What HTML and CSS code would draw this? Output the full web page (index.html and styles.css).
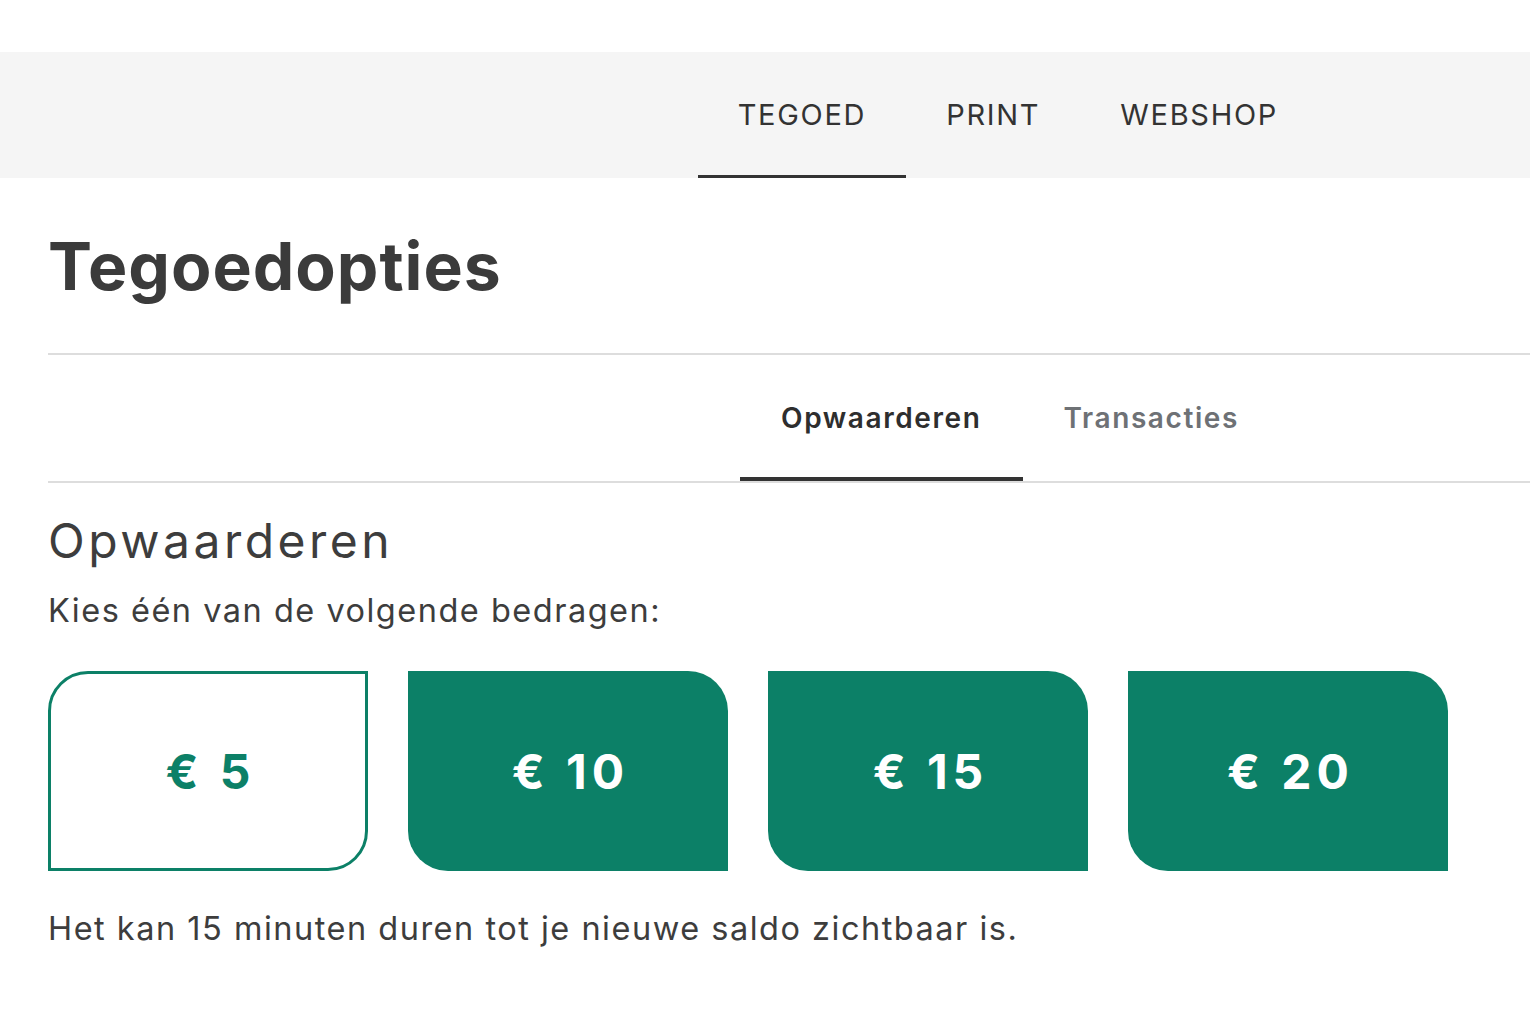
FILE: index.html
```html
<!DOCTYPE html>
<html lang="nl">
<head>
<meta charset="utf-8">
<title>Tegoedopties</title>
<link rel="stylesheet" href="styles.css">
</head>
<body>
<div class="topstrip"></div>
<nav class="mainnav">
  <a class="navitem active" href="#">TEGOED</a>
  <a class="navitem" href="#">PRINT</a>
  <a class="navitem" href="#">WEBSHOP</a>
</nav>
<main class="content">
  <div class="titlebox"><h1 class="title">Tegoedopties</h1></div>
  <div class="tabs">
    <a class="tab active" href="#">Opwaarderen</a>
    <a class="tab" href="#">Transacties</a>
  </div>
  <section class="topup">
    <h2 class="subtitle">Opwaarderen</h2>
    <p class="lead">Kies één van de volgende bedragen:</p>
    <div class="amounts">
      <button class="amount selected">€ 5</button>
      <button class="amount">€ 10</button>
      <button class="amount">€ 15</button>
      <button class="amount">€ 20</button>
    </div>
    <p class="note">Het kan 15 minuten duren tot je nieuwe saldo zichtbaar is.</p>
  </section>
</main>
</body>
</html>
```
FILE: styles.css
```css
* { box-sizing: border-box; }
html, body { margin: 0; padding: 0; background: #ffffff; }
body {
  font-family: Inter, "Open Sans", Arial, sans-serif;
  color: #3d3d3d;
}
.topstrip { height: 52px; background: #ffffff; }
.mainnav {
  height: 126px;
  background: #f5f5f5;
  display: flex;
  justify-content: flex-end;
  padding-right: 212px;
}
.navitem {
  display: flex;
  align-items: center;
  padding: 0 40px;
  font-size: 29px;
  letter-spacing: 1.7px;
  color: #333333;
  text-decoration: none;
  border-bottom: 3px solid transparent;
  border-top: 1px solid transparent;
}
.navitem.active { border-bottom-color: #333333; }
.content { padding-left: 48px; }
.titlebox {
  height: 175px;
  display: flex;
  align-items: center;
}
.title {
  margin: 0;
  font-size: 66px;
  font-weight: 700;
  color: #3b3b3b;
  letter-spacing: 1px;
}
.tabs {
  border-top: 2px solid #dddddd;
  border-bottom: 2px solid #dddddd;
  height: 130px;
  display: flex;
  justify-content: flex-end;
  padding-right: 250px;
}
.tab {
  display: flex;
  align-items: center;
  padding: 0 41px;
  font-size: 28px;
  font-weight: 600;
  color: #6e7175;
  text-decoration: none;
  letter-spacing: 1.6px;
  border-bottom: 4px solid transparent;
  border-top: 4px solid transparent;
}
.tab.active { color: #2e2e2e; border-bottom-color: #333333; }
.topup { padding-top: 20px; }
.subtitle {
  margin: 0;
  font-size: 48px;
  line-height: 76px;
  font-weight: 400;
  color: #3d3d3d;
  letter-spacing: 3.5px;
}
.lead {
  margin: 12px 0 0;
  font-size: 32.5px;
  line-height: 40px;
  color: #3d3d3d;
  letter-spacing: 1.5px;
}
.amounts {
  display: flex;
  gap: 40px;
  margin-top: 40px;
}
.amount {
  width: 320px;
  height: 200px;
  border: 0;
  background: #0c8067;
  color: #ffffff;
  font-family: Inter, "Open Sans", Arial, sans-serif;
  font-size: 48px;
  font-weight: 700;
  letter-spacing: 5px;
  text-indent: 5px;
  border-radius: 0 40px 0 40px;
  padding: 0;
  cursor: pointer;
}
.amount.selected {
  background: #ffffff;
  color: #0c8067;
  border: 3px solid #0c8067;
  border-radius: 40px 0 40px 0;
}
.note {
  margin: 38px 0 0;
  font-size: 32.5px;
  line-height: 40px;
  color: #3d3d3d;
  letter-spacing: 1.5px;
}
```
